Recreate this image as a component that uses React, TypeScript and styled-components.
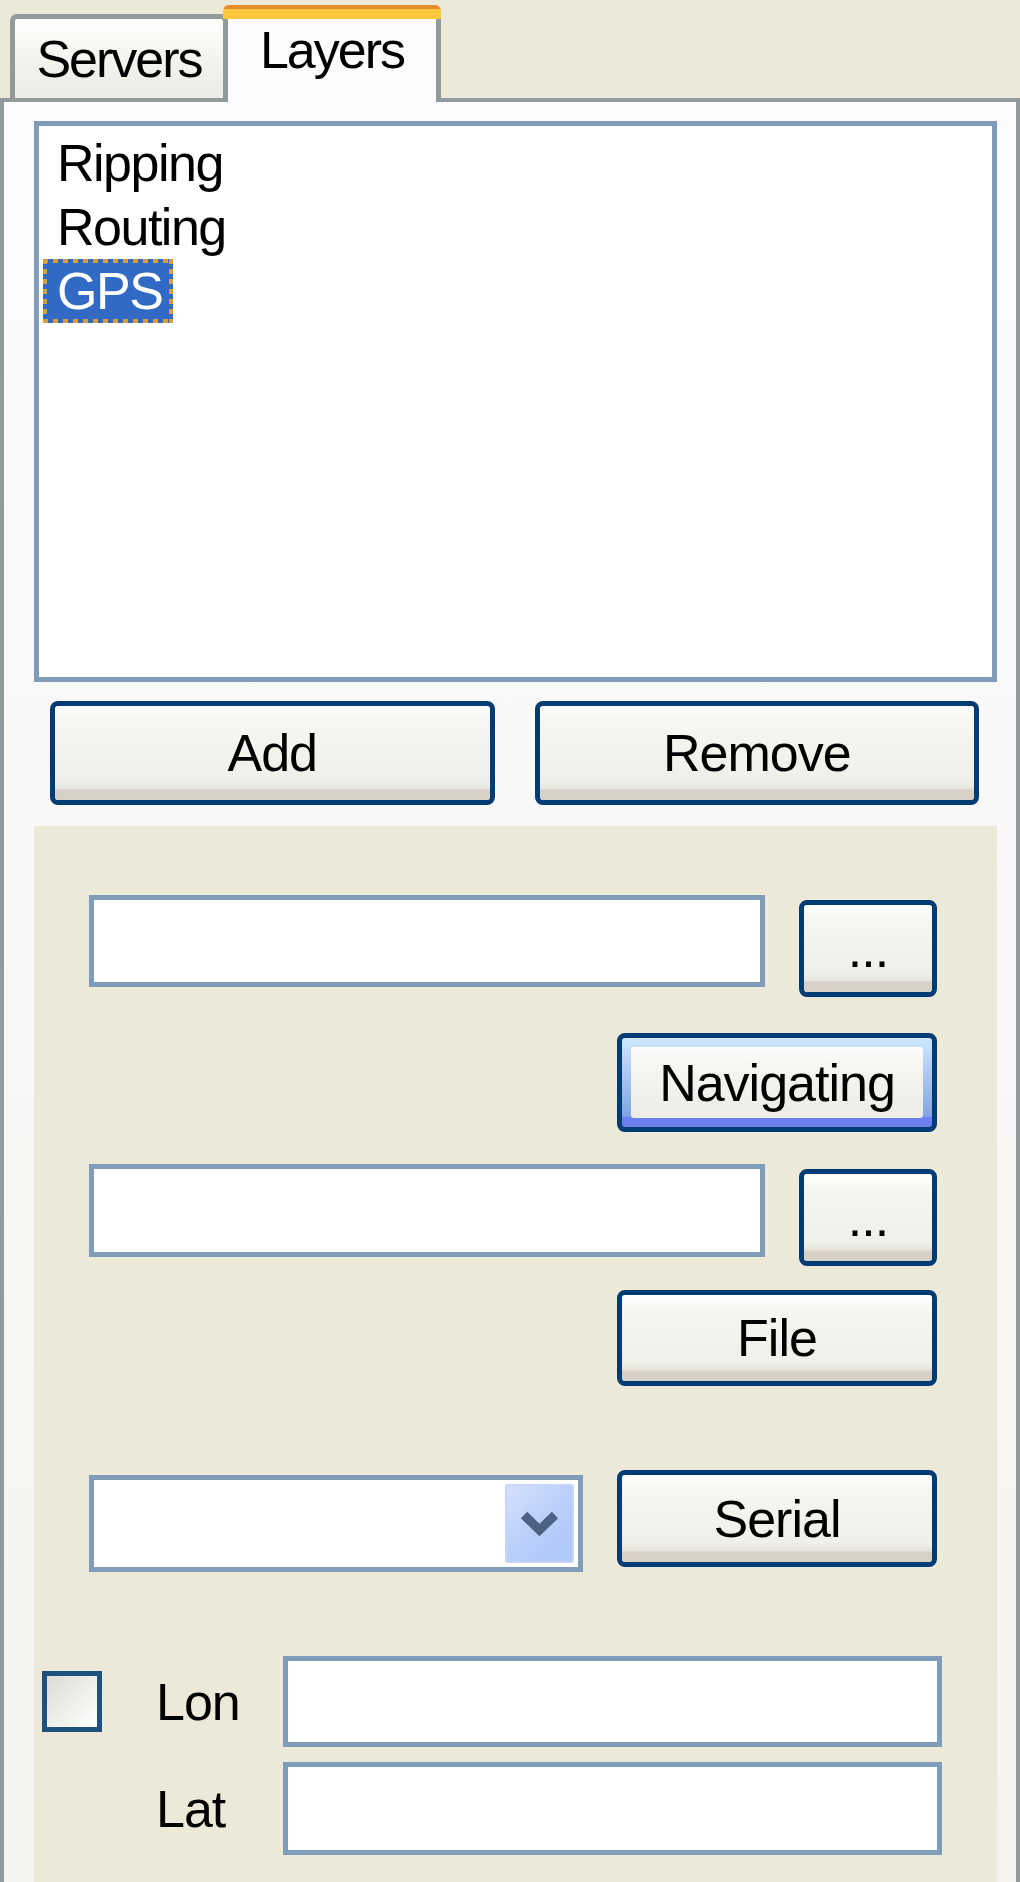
import React from 'react';
import styled, { createGlobalStyle } from 'styled-components';

const FONT = `"Liberation Sans", Arial, "DejaVu Sans", sans-serif`;

const GlobalStyle = createGlobalStyle`
  html, body { margin: 0; padding: 0; background: #ECE9D8; }
  body { font-family: ${FONT}; }
  * { box-sizing: border-box; }
`;

const Window = styled.div`
  width: 1020px;
  height: 1882px;
  overflow: hidden;
  background: #ECE9D8;
  display: flex;
  flex-direction: column;
  font-family: ${FONT};
  font-size: 52px;
  letter-spacing: -1px;
  color: #000;
`;

const TabStrip = styled.div`
  flex: none;
  height: 98px;
  display: flex;
  align-items: flex-end;
  padding-left: 10px;
`;

const Tab = styled.div<{ $active?: boolean }>`
  width: 218px;
  display: flex;
  align-items: center;
  justify-content: center;
  white-space: nowrap;
  letter-spacing: -2px;
  ${(p) =>
    p.$active
      ? `
    position: relative;
    z-index: 1;
    height: 97px;
    margin-left: -5px;
    margin-bottom: -4px;
    padding: 14px 0 22px;
    border-radius: 6px 6px 0 0;
    background:
      linear-gradient(#E68B2C, #E68B2C) 0 0 / 100% 4px no-repeat,
      linear-gradient(#FFC83C, #FFC83C) 0 4px / 100% 10px no-repeat,
      linear-gradient(#919B9C, #919B9C) left bottom / 5px calc(100% - 14px) no-repeat,
      linear-gradient(#919B9C, #919B9C) right bottom / 5px calc(100% - 14px) no-repeat,
      #FCFCFE;
  `
      : `
    height: 84px;
    border: 5px solid #919B9C;
    border-bottom: none;
    border-radius: 7px 7px 0 0;
    background: linear-gradient(#FEFEFD, #F2F1EC 60%, #ECEBE5);
  `}
`;

const Pane = styled.div`
  flex: 1;
  display: flex;
  flex-direction: column;
  border: 4px solid #919B9C;
  border-bottom: none;
  background: linear-gradient(#FCFCFE, #F4F3EE);
  padding: 19px 19px 0 30px;
`;

const ListBox = styled.div`
  flex: none;
  height: 561px;
  border: 5px solid #7F9DB9;
  background: #FFFFFF;
  padding: 5px 0 0 4px;
  display: flex;
  flex-direction: column;
`;

const ListRow = styled.div`
  height: 64px;
  display: flex;
`;

const ListLabel = styled.span<{ $selected?: boolean }>`
  padding: 0 11px 0 14px;
  line-height: 64px;
  white-space: nowrap;
  letter-spacing: -1.5px;
  ${(p) =>
    p.$selected &&
    `
    color: #FFFFFF;
    background:
      repeating-linear-gradient(90deg, #D69E3E 0 5px, transparent 5px 10px) top / 100% 4px no-repeat,
      repeating-linear-gradient(90deg, #D69E3E 0 5px, transparent 5px 10px) bottom / 100% 4px no-repeat,
      repeating-linear-gradient(180deg, #D69E3E 0 5px, transparent 5px 10px) left / 4px 100% no-repeat,
      repeating-linear-gradient(180deg, #D69E3E 0 5px, transparent 5px 10px) right / 4px 100% no-repeat,
      #316AC5;
  `}
`;

const ButtonRow = styled.div`
  flex: none;
  margin-top: 19px;
  height: 104px;
  display: grid;
  grid-template-columns: 1fr 1fr;
  gap: 40px;
  padding: 0 18px 0 16px;
`;

const Button = styled.button<{ $w?: number; $h?: number; $default?: boolean; $top?: number }>`
  flex: none;
  width: ${(p) => (p.$w ? `${p.$w}px` : '100%')};
  height: ${(p) => (p.$h ? `${p.$h}px` : '100%')};
  margin-top: ${(p) => p.$top ?? 0}px;
  padding: ${(p) => (p.$default ? '9px' : '0')};
  border: 5px solid #003C74;
  border-radius: 8px;
  background: ${(p) =>
    p.$default
      ? 'linear-gradient(#CEE7FF, #BAD3F6 25%, #8DAFE6 75%, #82A2E6 88%, #6D80EE 89%, #6D80EE)'
      : '#F0F0EA'};
  font: inherit;
  letter-spacing: inherit;
  color: #000;
  display: flex;
  cursor: default;
  overflow: hidden;
`;

const Face = styled.span<{ $default?: boolean }>`
  flex: 1;
  display: flex;
  align-items: center;
  justify-content: center;
  white-space: nowrap;
  border-radius: 3px;
  background: ${(p) =>
    p.$default
      ? 'linear-gradient(#FCFCFB, #F3F3EF 40%, #EDECE7)'
      : 'linear-gradient(#FFFFFF 0, #F6F6F2 14px, #F0F0EA calc(100% - 20px), #E6E4DC calc(100% - 11px), #D6D0C5 calc(100% - 10px), #D6D0C5 100%)'};
`;

const Group = styled.div`
  flex: 1;
  margin-top: 21px;
  background: #ECE9D8;
  display: flex;
  flex-direction: column;
  padding: 0 60px 0 8px;
`;

const FieldRow = styled.div<{ $top: number; $end?: boolean }>`
  display: flex;
  align-items: flex-start;
  justify-content: ${(p) => (p.$end ? 'flex-end' : 'flex-start')};
  gap: 34px;
  padding-left: 47px;
  margin-top: ${(p) => p.$top}px;
`;

const TextBox = styled.div<{ $h: number }>`
  flex: 1;
  height: ${(p) => p.$h}px;
  border: 5px solid #7F9DB9;
  background: #FFFFFF;
`;

const ComboBox = styled.div`
  flex: none;
  width: 494px;
  height: 97px;
  margin-top: 5px;
  border: 5px solid #7F9DB9;
  background: #FFFFFF;
  display: flex;
  justify-content: flex-end;
  padding: 4px 4px 4px 0;
`;

const DropButton = styled.div`
  width: 69px;
  display: flex;
  align-items: center;
  justify-content: center;
  border-radius: 3px;
  border: 2px solid #C6D6FA;
  background: linear-gradient(135deg, #D6E2FC 0%, #C0D2FB 40%, #B4CAF9 70%, #AFCBF8 100%);
`;

const CoordRow = styled.div<{ $top: number }>`
  display: grid;
  grid-template-columns: 60px 181px 659px;
  align-items: center;
  margin-top: ${(p) => p.$top}px;
`;

const CheckBox = styled.div`
  width: 60px;
  height: 61px;
  border: 5px solid #1C5180;
  background: linear-gradient(135deg, #DCDCD7 0%, #EEEEEA 50%, #FFFFFF 100%);
`;

const FieldLabel = styled.span`
  padding-left: 54px;
  white-space: nowrap;
`;

const Chevron = () => (
  <svg width="41" height="28" viewBox="0 0 41 28" aria-hidden="true">
    <polyline points="5,5 20.5,20 36,5" fill="none" stroke="#4D6185" strokeWidth="9" strokeLinejoin="miter" />
  </svg>
);

const layers = [
  { name: 'Ripping', selected: false },
  { name: 'Routing', selected: false },
  { name: 'GPS', selected: true },
];

export default function App() {
  return (
    <>
      <GlobalStyle />
      <Window>
        <TabStrip>
          <Tab>Servers</Tab>
          <Tab $active>Layers</Tab>
        </TabStrip>
        <Pane>
          <ListBox>
            {layers.map((l) => (
              <ListRow key={l.name}>
                <ListLabel $selected={l.selected}>{l.name}</ListLabel>
              </ListRow>
            ))}
          </ListBox>
          <ButtonRow>
            <Button><Face>Add</Face></Button>
            <Button><Face>Remove</Face></Button>
          </ButtonRow>
          <Group>
            <FieldRow $top={69}>
              <TextBox $h={92} />
              <Button $w={138} $h={97} $top={5}><Face>...</Face></Button>
            </FieldRow>
            <FieldRow $top={36} $end>
              <Button $w={320} $h={99} $default><Face $default>Navigating</Face></Button>
            </FieldRow>
            <FieldRow $top={32}>
              <TextBox $h={93} />
              <Button $w={138} $h={97} $top={5}><Face>...</Face></Button>
            </FieldRow>
            <FieldRow $top={24} $end>
              <Button $w={320} $h={96}><Face>File</Face></Button>
            </FieldRow>
            <FieldRow $top={84}>
              <ComboBox>
                <DropButton><Chevron /></DropButton>
              </ComboBox>
              <Button $w={320} $h={97}><Face>Serial</Face></Button>
            </FieldRow>
            <CoordRow $top={84}>
              <CheckBox />
              <FieldLabel>Lon</FieldLabel>
              <TextBox $h={91} />
            </CoordRow>
            <CoordRow $top={15}>
              <span />
              <FieldLabel>Lat</FieldLabel>
              <TextBox $h={93} />
            </CoordRow>
          </Group>
        </Pane>
      </Window>
    </>
  );
}
